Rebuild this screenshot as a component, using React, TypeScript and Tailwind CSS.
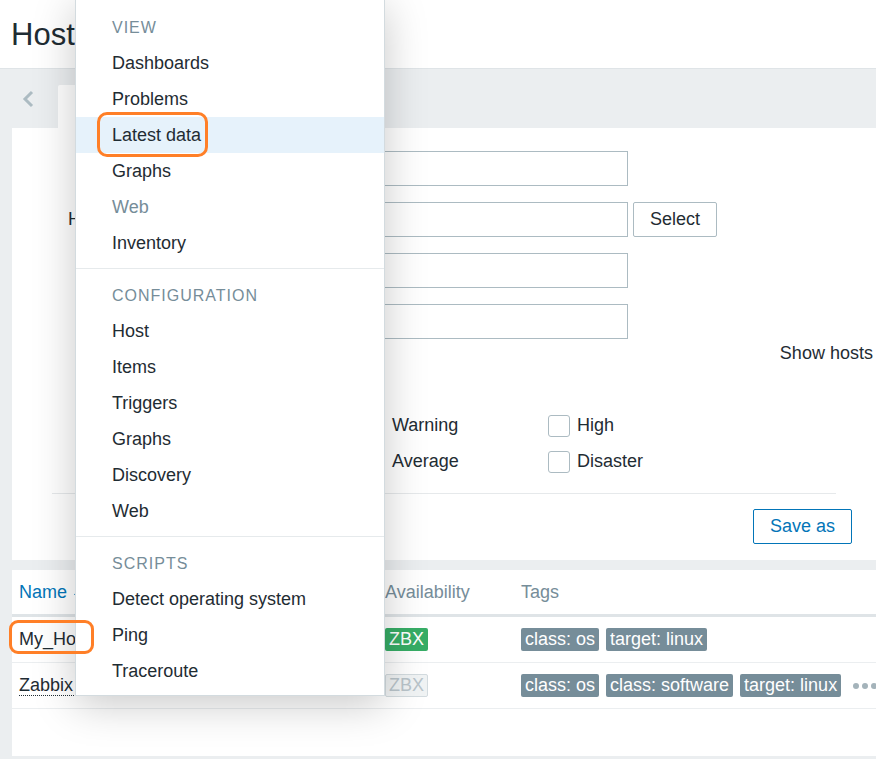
type MenuItem = { label: string; active?: boolean; disabled?: boolean };

const sections: { title: string; items: MenuItem[] }[] = [
  {
    title: "View",
    items: [
      { label: "Dashboards" },
      { label: "Problems" },
      { label: "Latest data", active: true },
      { label: "Graphs" },
      { label: "Web", disabled: true },
      { label: "Inventory" },
    ],
  },
  {
    title: "Configuration",
    items: ["Host", "Items", "Triggers", "Graphs", "Discovery", "Web"].map((label) => ({ label })),
  },
  {
    title: "Scripts",
    items: ["Detect operating system", "Ping", "Traceroute"].map((label) => ({ label })),
  },
];

const hosts = [
  { name: "My_Host", available: true, tags: ["class: os", "target: linux"], more: false },
  { name: "Zabbix server", available: false, tags: ["class: os", "class: software", "target: linux"], more: true },
];

const HostMenu = () => (
  <div className="absolute left-[75px] top-[-1px] z-10 w-[310px] border border-[#d3dbdf] bg-white pt-[9px] pb-[6px] shadow-[0_8px_40px_rgba(0,0,0,0.22)]">
    {sections.map((section, i) => (
      <div key={section.title} className={i > 0 ? "mt-[7px] border-t border-[#e6eaec] pt-[8px]" : ""}>
        <div className="flex h-[36px] items-center pl-[36px] pt-[1px] text-[16px] uppercase tracking-[1px] text-[#768d99]">
          {section.title}
        </div>
        {section.items.map((item) => (
          <div
            key={item.label}
            className={`flex h-[36px] items-center pl-[36px] text-[18px] ${item.active ? "bg-[#e6f2fb]" : ""} ${
              item.disabled ? "text-[#768d99]" : "text-[#1f2c33]"
            }`}
          >
            {item.label}
          </div>
        ))}
      </div>
    ))}
  </div>
);

const FormRow = ({ label, children }: { label: string; children?: React.ReactNode }) => (
  <div className="flex items-center">
    <div className="w-[153px] shrink-0 whitespace-nowrap text-right text-[18px]">{label}</div>
    <div className="ml-[13px] flex items-center">{children}</div>
  </div>
);

const TextInput = ({ width }: { width: string }) => (
  <div className={`h-[35px] ${width} border border-[#acbbc2] bg-white`} />
);

const Checkbox = ({ label }: { label: string }) => (
  <div className="flex items-center gap-[7px]">
    <div className="h-[22px] w-[22px] shrink-0 rounded-[3px] border border-[#acbbc2] bg-white" />
    <span className="whitespace-nowrap text-[18px]">{label}</span>
  </div>
);

const FilterPanel = () => (
  <section className="ml-[12px] bg-white pt-[23px] pb-[16px]">
    <div className="flex">
      <div className="flex w-[740px] shrink-0 flex-col gap-[16px]">
        <FormRow label="Name">
          <TextInput width="w-[450px]" />
        </FormRow>
        <FormRow label="Host groups">
          <TextInput width="w-[450px]" />
          <button className="ml-[5px] h-[35px] w-[84px] rounded-[2px] border border-[#acbbc2] bg-white text-[18px] text-[#1f2c33]">
            Select
          </button>
        </FormRow>
        <FormRow label="IP">
          <TextInput width="w-[450px]" />
        </FormRow>
        <FormRow label="DNS">
          <TextInput width="w-[450px]" />
        </FormRow>
        <FormRow label="Port">
          <TextInput width="w-[112px]" />
        </FormRow>
        <div className="flex pt-[6px]">
          <div className="w-[153px] shrink-0 text-right text-[18px] leading-[27px]">Severity</div>
          <div className="ml-[13px] grid grid-cols-[185px_185px_185px] gap-y-[9px]">
            <Checkbox label="Not classified" />
            <Checkbox label="Warning" />
            <Checkbox label="High" />
            <Checkbox label="Information" />
            <Checkbox label="Average" />
            <Checkbox label="Disaster" />
          </div>
        </div>
      </div>
      <div className="ml-[27px] flex w-[221px] shrink-0 flex-col text-right text-[18px]">
        <div className="mt-[185px] flex h-[35px] items-center justify-end whitespace-nowrap">
          Show hosts in maintenance
        </div>
      </div>
    </div>
    <div className="mx-[40px] mt-[18px] border-t border-[#e6e9eb]" />
    <div className="flex pt-[15px]">
      <button className="ml-[741px] h-[35px] w-[99px] shrink-0 rounded-[2px] border border-[#0275b8] bg-white text-[18px] text-[#0275b8]">
        Save as
      </button>
    </div>
  </section>
);

const HostTable = () => (
  <section className="ml-[12px] mt-[10px] h-[186px] bg-white">
    <div className="flex h-[47px] items-center border-b-[3px] border-[#dfe4e7] pl-[7px] text-[18px] text-[#768d99]">
      <div className="flex w-[366px] items-center gap-[6px] text-[#0275b8]">
        Name
        <svg width="10" height="8" viewBox="0 0 10 8">
          <path d="M5 1 L9 7 L1 7 Z" fill="#0275b8" />
        </svg>
      </div>
      <div className="w-[136px]">Availability</div>
      <div>Tags</div>
    </div>
    {hosts.map((host) => (
      <div key={host.name} className="flex h-[46px] items-center border-b border-[#ebeef0] pl-[7px] text-[18px]">
        <div className="w-[366px] shrink-0">
          <span className={host.available ? "" : "border-b border-dotted border-[#1f2c33] leading-[20px]"}>
            {host.name}
          </span>
        </div>
        <div className="w-[136px] shrink-0">
          {host.available ? (
            <span className="inline-flex h-[23px] items-center rounded-[2px] bg-[#37ad66] px-[4px] text-white">ZBX</span>
          ) : (
            <span className="inline-flex h-[23px] items-center rounded-[2px] border border-[#d3dbdf] bg-[#f0f3f4] px-[3px] text-[#b9c4ca]">
              ZBX
            </span>
          )}
        </div>
        <div className="flex items-center gap-[7px] whitespace-nowrap">
          {host.tags.map((tag) => (
            <span key={tag} className="inline-flex h-[23px] items-center rounded-[2px] bg-[#768d99] px-[4px] text-white">
              {tag}
            </span>
          ))}
          {host.more && (
            <span className="ml-[5px] flex gap-[3px]">
              <span className="h-[6px] w-[6px] rounded-full bg-[#a4b3ba]" />
              <span className="h-[6px] w-[6px] rounded-full bg-[#a4b3ba]" />
              <span className="h-[6px] w-[6px] rounded-full bg-[#a4b3ba]" />
            </span>
          )}
        </div>
      </div>
    ))}
  </section>
);

const App = () => {
  return (
    <div className="relative min-h-screen overflow-hidden bg-[#ebeef0] font-['Liberation_Sans',Arial,sans-serif] text-[#1f2c33]">
      <header className="flex h-[69px] items-center border-b border-[#dfe4e7] bg-white pl-[11px]">
        <h1 className="text-[31px] leading-none">Hosts</h1>
      </header>
      <div className="flex h-[59px] items-end">
        <div className="flex h-full w-[58px] items-center pl-[20px]">
          <svg width="16" height="20" viewBox="0 0 16 20">
            <path d="M12 3 L5 10 L12 17" fill="none" stroke="#acbbc2" strokeWidth="3" />
          </svg>
        </div>
        <div className="h-[43px] w-[260px] rounded-t-[2px] bg-white" />
      </div>
      <FilterPanel />
      <HostTable />

      <HostMenu />

      <div className="pointer-events-none absolute left-[97px] top-[112px] z-20 h-[45px] w-[111px] rounded-[10px] border-[3px] border-[#ff7f27]" />
      <div className="pointer-events-none absolute left-[9px] top-[620px] z-20 h-[34px] w-[85px] rounded-[9px] border-[3px] border-[#ff7f27]" />
    </div>
  );
};

export default App;
